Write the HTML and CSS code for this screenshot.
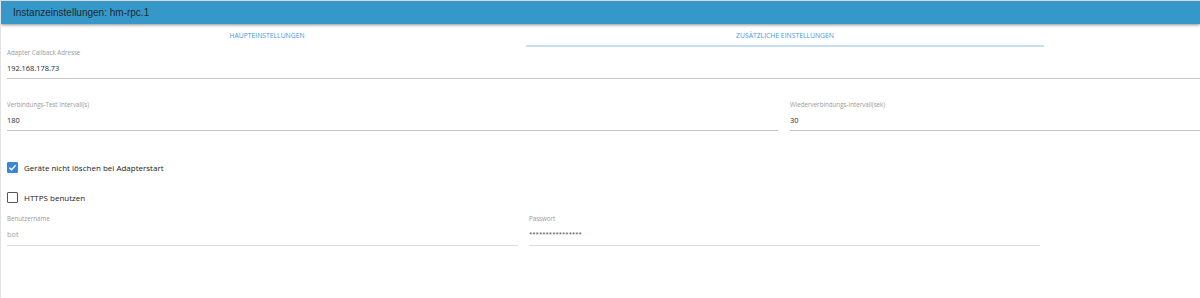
FILE: index.html
```html
<!DOCTYPE html>
<html lang="de">
<head>
<meta charset="utf-8">
<title>Instanzeinstellungen</title>
<link rel="stylesheet" href="styles.css">
</head>
<body>
<div class="page">
  <header class="topbar">Instanzeinstellungen: hm-rpc.1</header>
  <nav class="tabs">
    <div class="tab">HAUPTEINSTELLUNGEN</div>
    <div class="tab active">ZUSÄTZLICHE EINSTELLUNGEN</div>
  </nav>
  <section class="content">
    <div class="field full">
      <label class="flabel">Adapter Callback Adresse</label>
      <div class="fvalue">192.168.178.73</div>
    </div>
    <div class="row two">
      <div class="field">
        <label class="flabel">Verbindungs-Test Intervall(s)</label>
        <div class="fvalue">180</div>
      </div>
      <div class="field">
        <label class="flabel">Wiederverbindungs-Intervall(sek)</label>
        <div class="fvalue">30</div>
      </div>
    </div>
    <div class="check first">
      <span class="box checked">
        <svg viewBox="0 0 12 12" width="11" height="11"><path d="M2.6 6.2 L5 8.5 L9.4 3.6" fill="none" stroke="#fff" stroke-width="1.5"/></svg>
      </span>
      <span class="ctext">Geräte nicht löschen bei Adapterstart</span>
    </div>
    <div class="check second">
      <span class="box"></span>
      <span class="ctext">HTTPS benutzen</span>
    </div>
    <div class="row creds">
      <div class="field disabled">
        <label class="flabel">Benutzername</label>
        <div class="fvalue">bot</div>
      </div>
      <div class="field pass">
        <label class="flabel">Passwort</label>
        <div class="fvalue">****************</div>
      </div>
    </div>
  </section>
</div>
</body>
</html>
```
FILE: styles.css
```css
html, body {
  margin: 0;
  padding: 0;
  background: #fff;
}
.page {
  width: 1200px;
  height: 298px;
  box-sizing: border-box;
  border-left: 1px solid #e2e2e2;
  border-top: 1px solid #d8d8d8;
  overflow: hidden;
  font-family: "Open Sans", "Noto Sans", sans-serif;
}
.topbar {
  height: 23px;
  line-height: 24px;
  background: #3598c9;
  color: #1d2a33;
  font-family: "Liberation Sans", Arial, sans-serif;
  font-size: 10px;
  padding-left: 12px;
  box-shadow: 0 1px 3px rgba(0,0,0,0.45);
  position: relative;
  z-index: 1;
}
.tabs {
  display: flex;
  margin-left: 7px;
  height: 23px;
}
.tab {
  width: 518px;
  text-align: center;
  font-size: 6.8px;
  color: #4a96e0;
  line-height: 22px;
  padding-top: 1px;
  box-sizing: border-box;
  border-bottom: 2px solid transparent;
}
.tab.active {
  border-bottom-color: #c5def3;
}
.content {
  padding-left: 6px;
}
.field {
  display: flex;
  flex-direction: column;
  border-bottom: 1px solid #c4c4c4;
  box-sizing: border-box;
}
.flabel {
  font-size: 6.2px;
  color: #9a9a9a;
  height: 9px;
  line-height: 9px;
  padding-top: 1px;
}
.fvalue {
  font-size: 7.4px;
  color: #262626;
  line-height: 14px;
  padding-top: 4px;
}
.field.full {
  height: 32px;
}
.row.two {
  display: grid;
  grid-template-columns: 771px 1fr;
  gap: 12px;
  margin-top: 20px;
}
.row.two .field {
  height: 32px;
}
.check {
  display: flex;
  align-items: center;
  height: 12px;
}
.check.first { margin-top: 30px; }
.check.second { margin-top: 18px; }
.box {
  width: 11px;
  height: 11px;
  box-sizing: border-box;
  border: 1.5px solid #555;
  border-radius: 1px;
  display: flex;
  align-items: center;
  justify-content: center;
}
.box.checked {
  background: #3a87d6;
  border-color: #3a87d6;
}
.box.checked svg { display: block; flex: none; }
.ctext {
  margin-left: 6px;
  font-size: 8px;
  color: #222;
}
.row.creds {
  display: grid;
  grid-template-columns: 511px 511px;
  gap: 11px;
  margin-top: 10px;
}
.row.creds .field {
  height: 33px;
  border-bottom-color: #dcdcdc;
}
.field.disabled .fvalue {
  color: #a0a0a0;
}
.field.pass .fvalue {
  font-size: 6px;
  letter-spacing: 0;
  color: #444;
}
```
